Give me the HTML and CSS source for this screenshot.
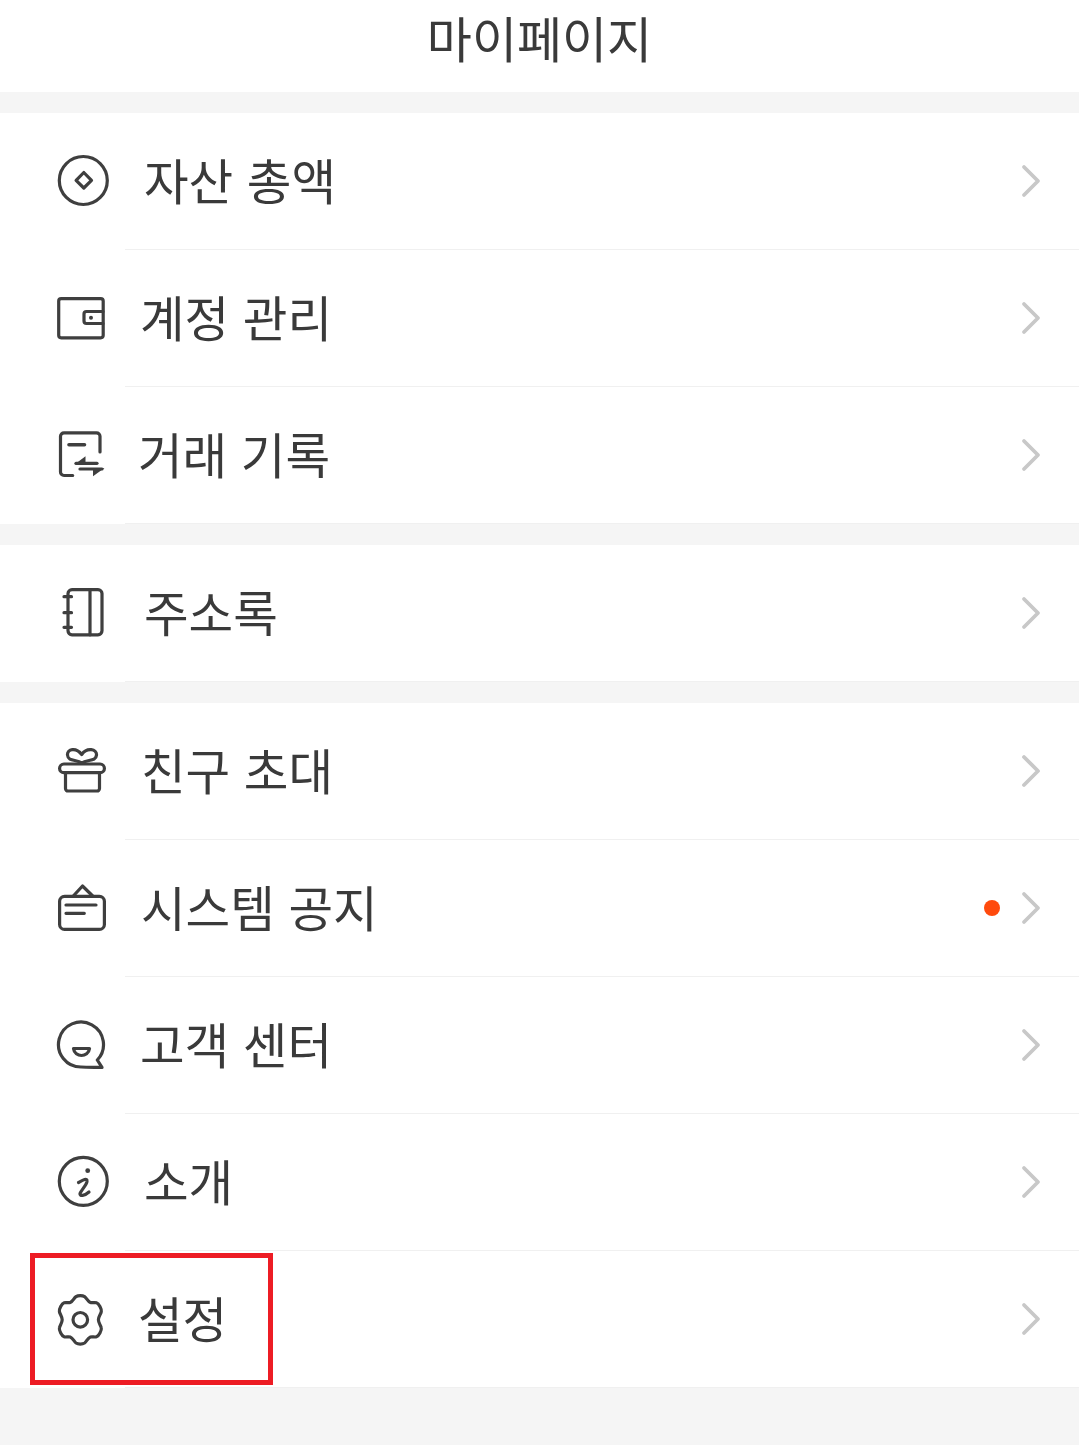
FILE: index.html
```html
<!DOCTYPE html>
<html lang="ko">
<head>
<meta charset="utf-8">
<title>마이페이지</title>
<link rel="stylesheet" href="styles.css">
</head>
<body>
<header class="title">마이페이지</header>

<section class="group">
  <div class="row">
    <svg class="icon gap-34" viewBox="0 0 54 54"><circle cx="27.3" cy="26.5" r="24"/><path d="M27.8 18.5 L35.5 26.3 L27.8 34 L20.1 26.3Z"/></svg>
    <span class="label">자산 총액</span>
    <svg class="chev" viewBox="0 0 20 34"><path d="M3 3 L17 17 L3 31"/></svg>
  </div>
  <div class="row">
    <svg class="icon gap-30" viewBox="0 0 54 54"><rect x="2.7" y="7.6" width="44.5" height="39.2" rx="2.5"/><path d="M47 20.5 H30.5 a2.5 2.5 0 0 0-2.5 2.5 V30 a2.5 2.5 0 0 0 2.5 2.5 H47"/><circle class="fill" cx="35" cy="26.7" r="2"/></svg>
    <span class="label">계정 관리</span>
    <svg class="chev" viewBox="0 0 20 34"><path d="M3 3 L17 17 L3 31"/></svg>
  </div>
  <div class="row">
    <svg class="icon gap-28" viewBox="0 0 54 54"><path d="M16.7 47.5 H8 a3.5 3.5 0 0 1-3.5-3.5 V8.3 a3.5 3.5 0 0 1 3.5-3.5 H40.5 a3.5 3.5 0 0 1 3.5 3.5 V24"/><path class="thick" d="M13 16.8 H28.5"/><path d="M20 35.3 H41"/><path class="fill" d="M18.5 36.5 L29.5 28.3 V36.5Z"/><path d="M24 41 H46"/><path class="fill" d="M48.5 40 L37 48.3 V40Z"/></svg>
    <span class="label">거래 기록</span>
    <svg class="chev" viewBox="0 0 20 34"><path d="M3 3 L17 17 L3 31"/></svg>
  </div>
</section>

<section class="group">
  <div class="row">
    <svg class="icon gap-34" viewBox="0 0 54 54"><rect x="12" y="3.6" width="34" height="45.2" rx="4"/><path d="M34 3.6 V48.8"/><path d="M8 10.7 H15.5 M8 26.7 H15.5 M8 41.3 H15.5"/></svg>
    <span class="label">주소록</span>
    <svg class="chev" viewBox="0 0 20 34"><path d="M3 3 L17 17 L3 31"/></svg>
  </div>
</section>

<section class="group">
  <div class="row">
    <svg class="icon gap-31" viewBox="0 0 54 54"><rect x="3.6" y="20" width="44.8" height="8.7" rx="4.3"/><path d="M9.5 29 V44.5 a2.5 2.5 0 0 0 2.5 2.5 H41 a2.5 2.5 0 0 0 2.5-2.5 V29"/><path d="M25.7 19 C21 15 12 18 11.5 11 C11 5 20 3 25.7 10.5 C31 3 41 5 40.5 11 C40 18 31 15 25.7 19"/></svg>
    <span class="label">친구 초대</span>
    <svg class="chev" viewBox="0 0 20 34"><path d="M3 3 L17 17 L3 31"/></svg>
  </div>
  <div class="row">
    <svg class="icon gap-31" viewBox="0 0 54 54"><rect x="3.6" y="15.3" width="44.8" height="33.1" rx="5"/><path d="M17.3 15 L26.5 5 L36.7 15"/><path d="M10 24 H40 M10 32.3 H28.3"/></svg>
    <span class="label">시스템 공지</span>
    <i class="dot"></i>
    <svg class="chev" viewBox="0 0 20 34"><path d="M3 3 L17 17 L3 31"/></svg>
  </div>
  <div class="row">
    <svg class="icon gap-30" viewBox="0 0 54 54"><path d="M25.2 49 C32 49.3 40 49.6 46 49.4 L41.3 42 A22.5 22.5 0 1 0 25.2 49Z"/><path d="M17.5 30.5 H33.5 C33 35 29 37.5 25.5 37.5 C22 37.5 18 35 17.5 30.5Z"/></svg>
    <span class="label">고객 센터</span>
    <svg class="chev" viewBox="0 0 20 34"><path d="M3 3 L17 17 L3 31"/></svg>
  </div>
  <div class="row">
    <svg class="icon gap-34" viewBox="0 0 54 54"><circle cx="27.3" cy="26.3" r="24"/><circle class="fill" cx="31.7" cy="15.7" r="2.4"/><path d="M22.5 27.5 C26 25.5 31.5 22 31 26.5 C30.5 30 25 35.5 24 38.5 C23.5 41.5 28.5 41 33 37"/></svg>
    <span class="label">소개</span>
    <svg class="chev" viewBox="0 0 20 34"><path d="M3 3 L17 17 L3 31"/></svg>
  </div>
  <div class="row">
    <svg class="icon gap-28" viewBox="0 0 54 54"><path d="M20 4.6 C22.2 3.2 26.4 3.2 28.6 4.6 C30.7 6 31.6 9.5 34.4 10.5 C36.3 11.2 38.6 10 40.5 10.8 C42.9 11.5 45.7 17 45.3 19.5 C45 22 42.4 24.5 42.4 27.8 C42.4 31 45 33.5 45.3 36 C45.7 38.5 42.9 44 40.5 44.8 C38.6 45.5 36.3 44.3 34.4 45 C31.6 46 30.7 49.5 28.6 51 C26.4 52.4 22.2 52.4 20 51 C17.9 49.5 17 46 14.2 45 C12.3 44.3 10 45.5 8.1 44.8 C5.7 44 3 38.5 3.4 36 C3.7 33.5 6.2 31 6.2 27.8 C6.2 24.5 3.7 22 3.4 19.5 C3 17 5.7 11.5 8.1 10.8 C10 10 12.3 11.2 14.2 10.5 C17 9.5 17.9 6 20 4.6Z"/><circle cx="24.3" cy="27.8" r="7.3"/></svg>
    <span class="label">설정</span>
    <svg class="chev" viewBox="0 0 20 34"><path d="M3 3 L17 17 L3 31"/></svg>
  </div>
</section>

<div class="highlight"></div>
</body>
</html>
```

FILE: styles.css
```css
html, body {
  margin: 0;
  padding: 0;
  height: 100%;
}
body {
  position: relative;
  background: #f5f5f5;
  color: #3a3a3a;
  font-family: "Noto Sans CJK KR", "Noto Sans", sans-serif;
  overflow: hidden;
}
.title {
  height: 92px;
  background: #fff;
  text-align: center;
  font-size: 49px;
  line-height: 73px;
}
.group {
  margin-top: 21px;
  background: #fff;
}
.row {
  position: relative;
  display: flex;
  align-items: center;
  height: 137px;
  padding: 0 38px 2px 56px;
  box-sizing: border-box;
}
.row::after {
  content: "";
  position: absolute;
  left: 125px;
  right: 0;
  bottom: 0;
  height: 1px;
  background: #f0f0f0;
}
.icon {
  flex: none;
  width: 54px;
  height: 54px;
  fill: none;
  stroke: #3f3f3f;
  stroke-width: 3.2;
  stroke-linecap: round;
  stroke-linejoin: round;
}
.gap-28 { margin-right: 28px; }
.gap-30 { margin-right: 30px; }
.gap-31 { margin-right: 31px; }
.gap-34 { margin-right: 34px; }
.icon .fill {
  fill: #3f3f3f;
  stroke: none;
}
.icon .thick {
  stroke-width: 3.6;
}
.label {
  flex: 1;
  font-size: 48.5px;
  line-height: 70px;
  padding-bottom: 4px;
}
.dot {
  flex: none;
  width: 16px;
  height: 16px;
  margin-right: 21px;
  border-radius: 50%;
  background: #ff4a0d;
}
.chev {
  flex: none;
  width: 20px;
  height: 34px;
  fill: none;
  stroke: #c8c8c8;
  stroke-width: 3.8;
  stroke-linecap: round;
  stroke-linejoin: round;
}
.highlight {
  position: absolute;
  left: 30px;
  top: 1253px;
  width: 243px;
  height: 132px;
  box-sizing: border-box;
  border: 5px solid #ed1c24;
}
```
